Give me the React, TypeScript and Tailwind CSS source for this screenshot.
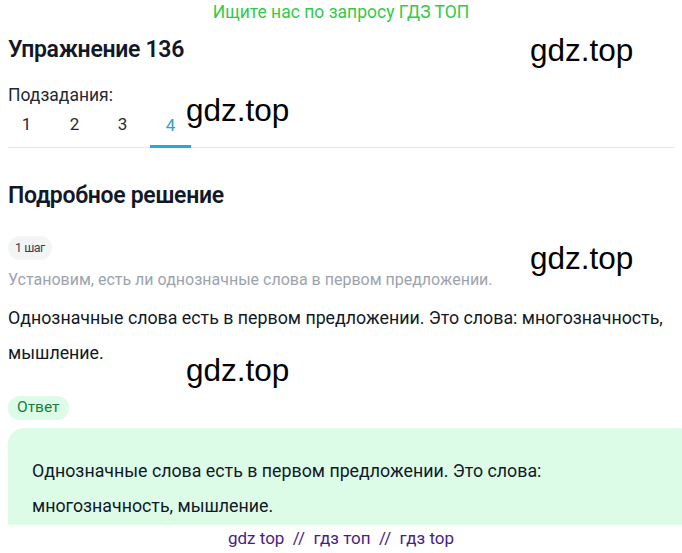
const wm = "absolute text-[31.5px] leading-none text-black";
const wmFont = { fontFamily: "'Liberation Sans', Arial, sans-serif" };

export default function App() {
  const tabs = ["1", "2", "3", "4"];
  return (
    <div
      className="relative h-[553px] w-[682px] overflow-hidden bg-white text-[#111827]"
      style={{ fontFamily: "Roboto, 'Noto Sans', sans-serif" }}
    >
      <div className="flex h-[25px] items-center justify-center text-[17.5px] text-[#33c94a]">
        Ищите нас по запросу ГДЗ ТОП
      </div>

      <div className="px-2">
        <h1 className="mt-[9px] text-[23px] font-semibold leading-[32px] tracking-[-0.3px]">Упражнение 136</h1>

        <div className="mt-[17px] text-[17.5px] leading-[24px] text-[#1f2937]">Подзадания:</div>
        <div className="mt-[3px] flex border-b border-[#e5e7eb]">
          {tabs.map((t) => (
            <div
              key={t}
              className={
                t === "4"
                  ? "-mb-px flex h-[38px] w-[41px] mr-[7px] items-center justify-center border-b-[3px] border-[#2aa8d6] pb-[4px] text-[17px] text-[#3a9bc7]"
                  : "flex h-[37px] w-[41px] mr-[7px] items-center justify-center pb-[7px] text-[17px] text-[#1f2937] first:ml-[-2px]"
              }
            >
              {t}
            </div>
          ))}
        </div>

        <h2 className="mt-[32px] text-[23px] font-semibold leading-[32px] tracking-[-0.3px]">Подробное решение</h2>

        <div className="mt-[24px] inline-flex h-[24px] items-center rounded-full bg-[#f3f4f6] px-[7px] text-[12.5px] tracking-[-0.5px] text-[#374151]">
          1 шаг
        </div>
        <p className="mt-[8px] text-[16px] leading-[24px] text-[#9ca3af]">
          Установим, есть ли однозначные слова в первом предложении.
        </p>
        <p className="mt-[8px] text-[17.8px] leading-[35px] text-[#111827]">
          Однозначные слова есть в первом предложении. Это слова: многозначность, мышление.
        </p>

        <div className="mt-[26px] inline-flex h-[24px] items-center rounded-full bg-[#dcfce7] px-[9px] text-[15.5px] text-[#15803d]">
          Ответ
        </div>
        <div className="mt-[8px] mr-[-20px] h-[120px] rounded-[16px] bg-[#dcfce7] px-[24px] pt-[25px]">
          <p className="max-w-[600px] text-[17.8px] leading-[35px] text-[#111827]">
            Однозначные слова есть в первом предложении. Это слова: многозначность, мышление.
          </p>
        </div>
      </div>

      <div className="absolute bottom-0 left-0 right-0 flex h-[28px] items-center justify-center bg-white text-[17px] text-[#4a1d85]">
        gdz top&nbsp;&nbsp;//&nbsp;&nbsp;гдз топ&nbsp;&nbsp;//&nbsp;&nbsp;гдз top
      </div>

      <span className={`${wm} left-[530px] top-[35px]`} style={wmFont}>gdz.top</span>
      <span className={`${wm} left-[186px] top-[95px]`} style={wmFont}>gdz.top</span>
      <span className={`${wm} left-[530px] top-[243px]`} style={wmFont}>gdz.top</span>
      <span className={`${wm} left-[186px] top-[355px]`} style={wmFont}>gdz.top</span>
    </div>
  );
}
